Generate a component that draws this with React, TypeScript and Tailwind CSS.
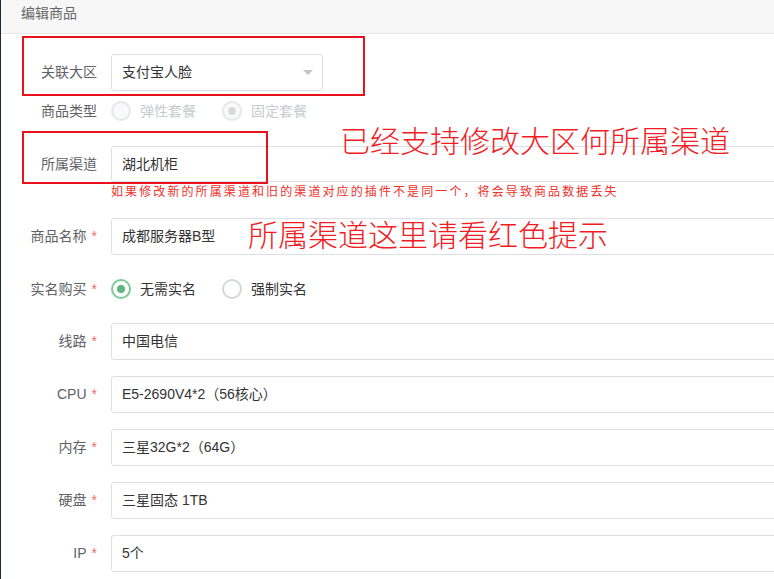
import type { ReactNode } from 'react'

function Label({ text, required }: { text: string; required?: boolean }) {
  return (
    <div className="w-[96px] shrink-0 text-right text-[14px] text-[#606266]">
      {text}
      {required && <span className="ml-[5px] text-[#f56c6c]">*</span>}
    </div>
  )
}

function Row({
  label,
  required,
  className = '',
  children,
}: {
  label: string
  required?: boolean
  className?: string
  children: ReactNode
}) {
  return (
    <div className={`flex items-center ${className}`}>
      <Label text={label} required={required} />
      <div className="ml-[14px] flex items-center">{children}</div>
    </div>
  )
}

function Input({ value, height = 'h-[37px]' }: { value: string; height?: string }) {
  return (
    <div
      className={`${height} flex w-[700px] shrink-0 items-center rounded-[3px] border border-[#dcdfe6] pl-[10px] text-[14px] text-[#333]`}
    >
      {value}
    </div>
  )
}

function Radio({
  label,
  checked,
  disabled,
}: {
  label: string
  checked?: boolean
  disabled?: boolean
}) {
  const ring = disabled
    ? 'border-[#e4e7ed] bg-[#fafafa]'
    : checked
      ? 'border-[#7ccb93] bg-white'
      : 'border-[#d4d7dc] bg-white'
  const dot = disabled ? 'bg-[#d9d9d9]' : 'bg-[#5cb87a]'
  return (
    <div className="mr-[26px] flex items-center">
      <span
        className={`flex h-[20px] w-[20px] items-center justify-center rounded-full border-2 ${ring}`}
      >
        {checked && <span className={`h-[8px] w-[8px] rounded-full ${dot}`} />}
      </span>
      <span
        className={`ml-[9px] text-[14px] ${disabled ? 'text-[#c8cbd0]' : 'text-[#333]'}`}
      >
        {label}
      </span>
    </div>
  )
}

export default function App() {
  return (
    <div className="relative flex h-[579px] w-[774px] overflow-hidden bg-white font-['Liberation_Sans','Noto_Sans_CJK_SC',sans-serif]">
      <div className="w-px shrink-0 bg-[#1d2939]" />

      <div className="flex min-w-0 flex-1 flex-col">
        <div className="h-[34px] shrink-0 border-b border-[#e6e6e6] bg-[#f7f7f7] pl-[20px] pt-[3px] text-[14px] leading-[20px] text-[#666]">
          编辑商品
        </div>

        <div className="flex flex-col pt-[20px]">
          <Row label="关联大区">
            <div className="flex h-[37px] w-[212px] items-center justify-between rounded-[3px] border border-[#dcdfe6] pl-[10px] pr-[9px] text-[14px] text-[#333]">
              支付宝人脸
              <span className="h-0 w-0 border-x-[5px] border-t-[5px] border-x-transparent border-t-[#c0c4cc]" />
            </div>
          </Row>

          <Row label="商品类型" className="h-[40px]">
            <Radio label="弹性套餐" disabled />
            <Radio label="固定套餐" disabled checked />
          </Row>

          <Row label="所属渠道" className="mt-[15px]">
            <Input value="湖北机柜" height="h-[36px]" />
          </Row>

          <div className="h-[21px] pl-[110px] text-[12px] leading-[21px] tracking-[2.1px] text-[#f0302a]">
            如果修改新的所属渠道和旧的渠道对应的插件不是同一个，将会导致商品数据丢失
          </div>

          <Row label="商品名称" required className="mt-[15px]">
            <Input value="成都服务器B型" />
          </Row>

          <Row label="实名购买" required className="mt-[16px] h-[36px]">
            <Radio label="无需实名" checked />
            <Radio label="强制实名" />
          </Row>

          <Row label="线路" required className="mt-[16px]">
            <Input value="中国电信" />
          </Row>
          <Row label="CPU" required className="mt-[16px]">
            <Input value="E5-2690V4*2（56核心）" />
          </Row>
          <Row label="内存" required className="mt-[16px]">
            <Input value="三星32G*2（64G）" />
          </Row>
          <Row label="硬盘" required className="mt-[16px]">
            <Input value="三星固态 1TB" />
          </Row>
          <Row label="IP" required className="mt-[16px]">
            <Input value="5个" />
          </Row>
        </div>
      </div>

      {/* annotations drawn over the form */}
      <div className="pointer-events-none absolute left-[22px] top-[36px] h-[60px] w-[343px] border-2 border-[#e8111c]" />
      <div className="pointer-events-none absolute left-[22px] top-[131px] h-[53px] w-[246px] border-2 border-[#e8111c]" />
      <div className="pointer-events-none absolute left-[340px] top-[127px] whitespace-nowrap text-[30px] font-light leading-[30px] text-[#f21c24]">
        已经支持修改大区何所属渠道
      </div>
      <div className="pointer-events-none absolute left-[248px] top-[221px] whitespace-nowrap text-[30px] font-light leading-[30px] text-[#f21c24]">
        所属渠道这里请看红色提示
      </div>
    </div>
  )
}
